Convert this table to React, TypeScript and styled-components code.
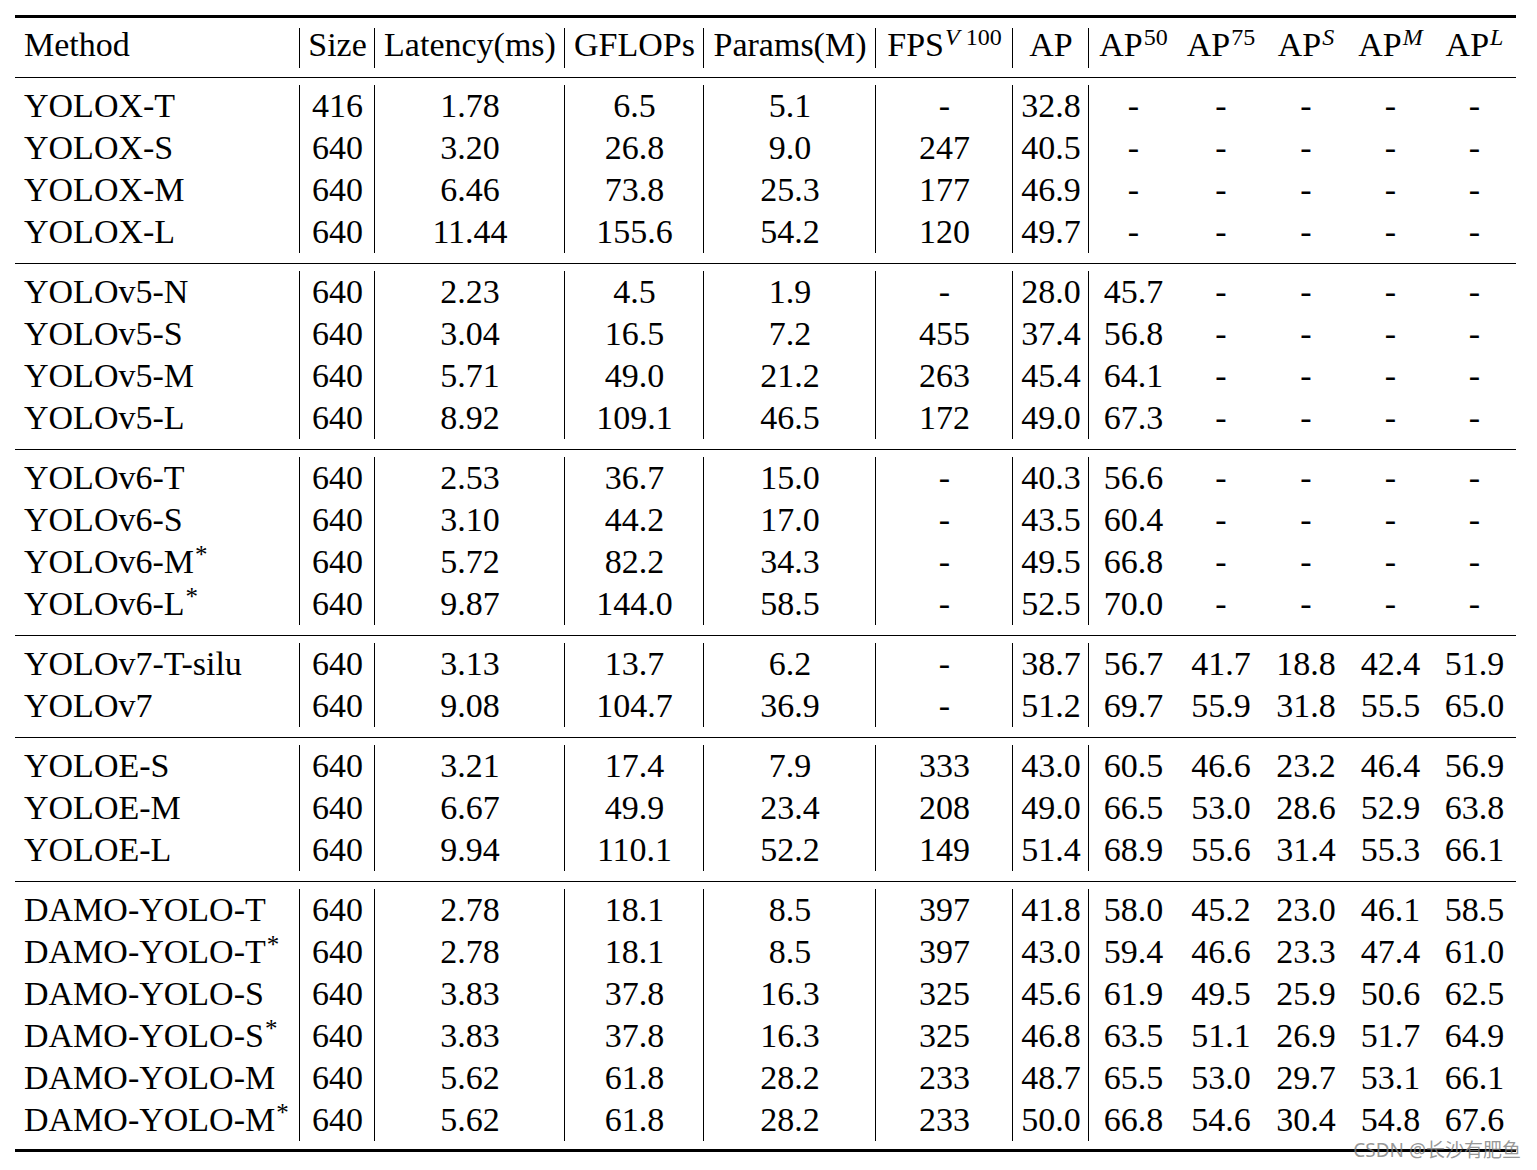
import React from "react";
import styled, { createGlobalStyle } from "styled-components";

const Global = createGlobalStyle`
  html, body { margin: 0; padding: 0; background: #fff; }
  body { font-family: "Liberation Serif", "Times New Roman", serif; color: #000; }
`;

const COLS = "285px 75px 190px 139px 172px 137px 76px 89px 86px 84px 85px 83px";
const DIVIDERS = [false, true, true, true, true, true, true, true, false, false, false, false];

const Page = styled.div`
  width: 1537px;
  height: 1170px;
  padding: 15px 0 0 15px;
  box-sizing: border-box;
  position: relative;
`;

const Table = styled.div`
  width: 1501px;
  position: relative;
  font-family: "Liberation Serif", "Times New Roman", serif;
  font-size: 34px;
`;

const Rule = styled.div<{ $thick?: boolean }>`
  height: ${(p) => (p.$thick ? "3px" : "1px")};
  background: #000;
`;

const HeadSection = styled.div`
  padding: 10px 0 9px;
`;

const Group = styled.div<{ $last?: boolean }>`
  padding: 7px 0 ${(p) => (p.$last ? "8px" : "10px")};
`;

const Row = styled.div<{ $head?: boolean }>`
  display: grid;
  grid-template-columns: ${COLS};
  height: ${(p) => (p.$head ? "40px" : "42px")};
`;

const Cell = styled.div<{ $divider?: boolean; $left?: boolean; $head?: boolean }>`
  border-left: ${(p) => (p.$divider ? "1px solid #000" : "1px solid transparent")};
  margin-left: -1px;
  text-align: ${(p) => (p.$left ? "left" : "center")};
  padding-left: ${(p) => (p.$left ? "9px" : "0")};
  line-height: ${(p) => (p.$head ? "34px" : "42px")};
  white-space: nowrap;
`;

const Sup = styled.span<{ $italic?: boolean }>`
  font-size: 24px;
  font-style: ${(p) => (p.$italic ? "italic" : "normal")};
  vertical-align: 11px;
  line-height: 0;
  margin-left: 1px;
`;

const Star = styled.span`
  font-size: 25px;
  vertical-align: 10px;
  line-height: 0;
  margin-left: 1px;
`;

const Watermark = styled.div`
  position: absolute;
  right: -5px;
  bottom: -9px;
  font-family: "Noto Sans", "Noto Sans CJK SC", sans-serif;
  font-size: 19px;
  line-height: 21px;
  color: rgba(125, 125, 125, 0.8);
  white-space: nowrap;
`;

type RowData = { name: string; star?: boolean; vals: string[] };

const D = "-";
const groups: RowData[][] = [
  [
    { name: "YOLOX-T", vals: ["416", "1.78", "6.5", "5.1", D, "32.8", D, D, D, D, D] },
    { name: "YOLOX-S", vals: ["640", "3.20", "26.8", "9.0", "247", "40.5", D, D, D, D, D] },
    { name: "YOLOX-M", vals: ["640", "6.46", "73.8", "25.3", "177", "46.9", D, D, D, D, D] },
    { name: "YOLOX-L", vals: ["640", "11.44", "155.6", "54.2", "120", "49.7", D, D, D, D, D] },
  ],
  [
    { name: "YOLOv5-N", vals: ["640", "2.23", "4.5", "1.9", D, "28.0", "45.7", D, D, D, D] },
    { name: "YOLOv5-S", vals: ["640", "3.04", "16.5", "7.2", "455", "37.4", "56.8", D, D, D, D] },
    { name: "YOLOv5-M", vals: ["640", "5.71", "49.0", "21.2", "263", "45.4", "64.1", D, D, D, D] },
    { name: "YOLOv5-L", vals: ["640", "8.92", "109.1", "46.5", "172", "49.0", "67.3", D, D, D, D] },
  ],
  [
    { name: "YOLOv6-T", vals: ["640", "2.53", "36.7", "15.0", D, "40.3", "56.6", D, D, D, D] },
    { name: "YOLOv6-S", vals: ["640", "3.10", "44.2", "17.0", D, "43.5", "60.4", D, D, D, D] },
    { name: "YOLOv6-M", star: true, vals: ["640", "5.72", "82.2", "34.3", D, "49.5", "66.8", D, D, D, D] },
    { name: "YOLOv6-L", star: true, vals: ["640", "9.87", "144.0", "58.5", D, "52.5", "70.0", D, D, D, D] },
  ],
  [
    { name: "YOLOv7-T-silu", vals: ["640", "3.13", "13.7", "6.2", D, "38.7", "56.7", "41.7", "18.8", "42.4", "51.9"] },
    { name: "YOLOv7", vals: ["640", "9.08", "104.7", "36.9", D, "51.2", "69.7", "55.9", "31.8", "55.5", "65.0"] },
  ],
  [
    { name: "YOLOE-S", vals: ["640", "3.21", "17.4", "7.9", "333", "43.0", "60.5", "46.6", "23.2", "46.4", "56.9"] },
    { name: "YOLOE-M", vals: ["640", "6.67", "49.9", "23.4", "208", "49.0", "66.5", "53.0", "28.6", "52.9", "63.8"] },
    { name: "YOLOE-L", vals: ["640", "9.94", "110.1", "52.2", "149", "51.4", "68.9", "55.6", "31.4", "55.3", "66.1"] },
  ],
  [
    { name: "DAMO-YOLO-T", vals: ["640", "2.78", "18.1", "8.5", "397", "41.8", "58.0", "45.2", "23.0", "46.1", "58.5"] },
    { name: "DAMO-YOLO-T", star: true, vals: ["640", "2.78", "18.1", "8.5", "397", "43.0", "59.4", "46.6", "23.3", "47.4", "61.0"] },
    { name: "DAMO-YOLO-S", vals: ["640", "3.83", "37.8", "16.3", "325", "45.6", "61.9", "49.5", "25.9", "50.6", "62.5"] },
    { name: "DAMO-YOLO-S", star: true, vals: ["640", "3.83", "37.8", "16.3", "325", "46.8", "63.5", "51.1", "26.9", "51.7", "64.9"] },
    { name: "DAMO-YOLO-M", vals: ["640", "5.62", "61.8", "28.2", "233", "48.7", "65.5", "53.0", "29.7", "53.1", "66.1"] },
    { name: "DAMO-YOLO-M", star: true, vals: ["640", "5.62", "61.8", "28.2", "233", "50.0", "66.8", "54.6", "30.4", "54.8", "67.6"] },
  ],
];

const headers: React.ReactNode[] = [
  "Method",
  "Size",
  "Latency(ms)",
  "GFLOPs",
  "Params(M)",
  <>FPS<Sup><i>V</i> 100</Sup></>,
  "AP",
  <>AP<Sup>50</Sup></>,
  <>AP<Sup>75</Sup></>,
  <>AP<Sup $italic>S</Sup></>,
  <>AP<Sup $italic>M</Sup></>,
  <>AP<Sup $italic>L</Sup></>,
];

export default function App() {
  return (
    <>
      <Global />
      <Page>
        <Table>
          <Rule $thick />
          <HeadSection>
            <Row $head>
              {headers.map((h, i) => (
                <Cell key={i} $head $divider={DIVIDERS[i]} $left={i === 0}>
                  {h}
                </Cell>
              ))}
            </Row>
          </HeadSection>
          {groups.map((g, gi) => (
            <React.Fragment key={gi}>
              <Rule />
              <Group $last={gi === groups.length - 1}>
                {g.map((r, ri) => (
                  <Row key={ri}>
                    <Cell $left>
                      {r.name}
                      {r.star && <Star>*</Star>}
                    </Cell>
                    {r.vals.map((v, vi) => (
                      <Cell key={vi} $divider={DIVIDERS[vi + 1]}>
                        {v}
                      </Cell>
                    ))}
                  </Row>
                ))}
              </Group>
            </React.Fragment>
          ))}
          <Rule $thick />
          <Watermark>CSDN @长沙有肥鱼</Watermark>
        </Table>
      </Page>
    </>
  );
}
